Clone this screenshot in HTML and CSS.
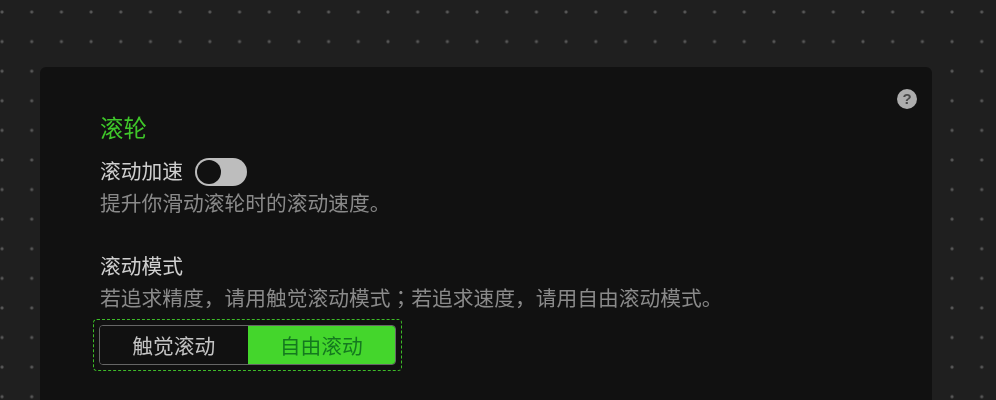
FILE: index.html
```html
<!DOCTYPE html>
<html lang="zh-CN">
<head>
<meta charset="utf-8">
<title>滚轮</title>
<link rel="stylesheet" href="styles.css">
</head>
<body>
<main class="card">
  <span class="help">?</span>
  <h2 class="title">滚轮</h2>
  <section class="setting accel">
    <div class="label-row">
      <span class="label">滚动加速</span>
      <span class="toggle"><span class="knob"></span></span>
    </div>
    <p class="desc">提升你滑动滚轮时的滚动速度。</p>
  </section>
  <section class="setting mode">
    <div class="label">滚动模式</div>
    <p class="desc">若追求精度，请用触觉滚动模式<span class="punct" lang="zh-TW">；</span>若追求速度，请用自由滚动模式。</p>
    <div class="focus-ring">
      <div class="segmented">
        <span class="seg">触觉滚动</span>
        <span class="seg seg-on">自由滚动</span>
      </div>
    </div>
  </section>
</main>
</body>
</html>
```
FILE: styles.css
```css
* { box-sizing: border-box; }
html, body { margin: 0; height: 400px; overflow: hidden; }
body {
  padding: 67px 64px 0 40px;
  background-color: #1f1f1f;
  background-image: radial-gradient(circle at center, #6a6a6a 0, #505050 1px, rgba(80,80,80,0) 2.2px);
  background-size: 29.7px 29.6px;
  background-position: -12.8px -2.8px;
  font-family: "Noto Sans CJK SC", "Liberation Sans", sans-serif;
}
.card {
  position: relative;
  height: 333px;
  padding: 45px 60px 0;
  background: #111;
  border-radius: 6px 6px 0 0;
  filter: blur(0.5px);
}
.help {
  position: absolute;
  top: 22px;
  right: 15px;
  width: 20px;
  height: 20px;
  border-radius: 50%;
  background: #adadad;
  color: #4a4a4a;
  font: bold 15px/20px "Liberation Sans", sans-serif;
  text-align: center;
}
.title {
  margin: 0;
  font-size: 23.4px;
  line-height: 30px;
  font-weight: 400;
  color: #3fc62a;
}
.accel { margin-top: 14px; }
.label-row { display: flex; align-items: center; gap: 12px; height: 28px; }
.label { font-size: 20.75px; line-height: 28px; color: #cfcfcf; white-space: nowrap; }
.desc { margin: 0; font-size: 20.75px; line-height: 36px; color: #8a8a8a; white-space: nowrap; }
.punct { font-family: "Noto Sans CJK TC", sans-serif; }
.toggle {
  display: flex;
  width: 52px;
  height: 28px;
  margin-top: 4px;
  padding: 2px;
  border-radius: 14px;
  background: #bdbdbd;
}
.knob { width: 24px; height: 24px; border-radius: 50%; background: #111; }
.mode { margin-top: 30px; }
.mode .label { line-height: 30px; }
.mode .desc { line-height: 35px; }
.focus-ring {
  width: 309px;
  height: 52px;
  margin: 4px 0 0 -7px;
  padding: 5px;
  border: 1px dashed #3dbb28;
  border-radius: 4px;
}
.segmented {
  display: flex;
  height: 40px;
  border: 1px solid #666;
  border-radius: 4px;
  overflow: hidden;
}
.seg {
  flex: 1;
  font-size: 20.75px;
  line-height: 38px;
  text-align: center;
  color: #c4c4c4;
  background: #111;
}
.seg-on { background: #44d62c; color: #14791f; }
```
